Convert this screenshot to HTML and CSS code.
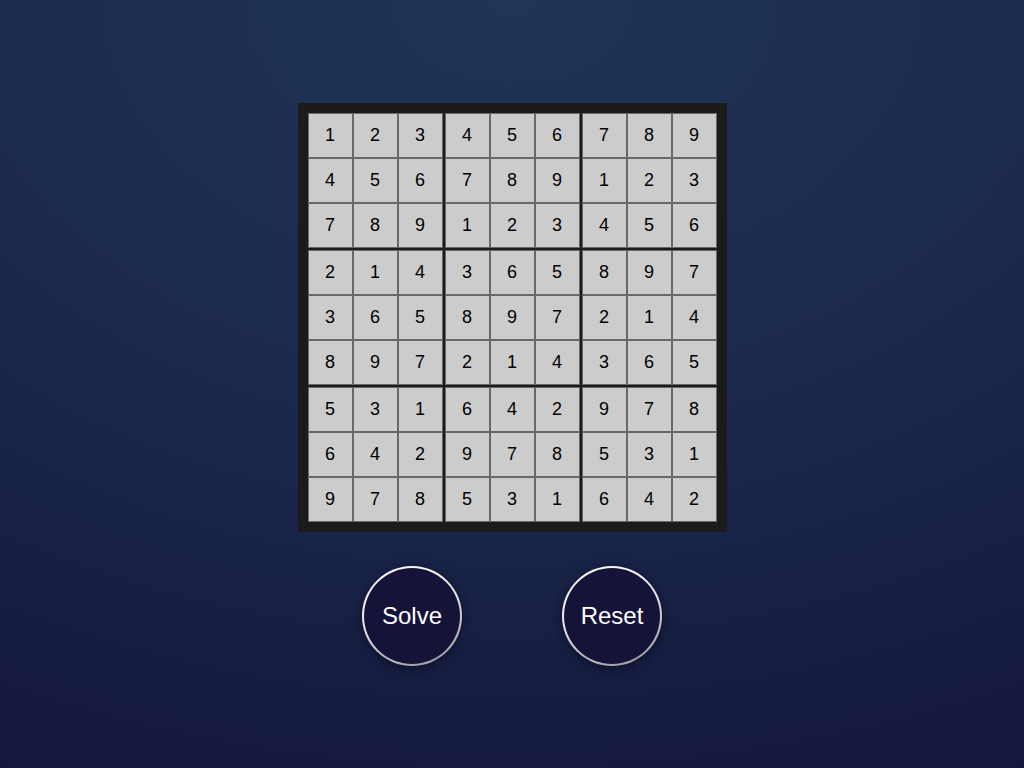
FILE: index.html
```html
<!DOCTYPE html>
<html lang="en">
<head>
<meta charset="utf-8">
<title>Sudoku</title>
<link rel="stylesheet" href="styles.css">
</head>
<body>
<main class="app">
  <div class="board">
    <div class="block"><div class="cell">1</div><div class="cell">2</div><div class="cell">3</div><div class="cell">4</div><div class="cell">5</div><div class="cell">6</div><div class="cell">7</div><div class="cell">8</div><div class="cell">9</div></div>
    <div class="block"><div class="cell">4</div><div class="cell">5</div><div class="cell">6</div><div class="cell">7</div><div class="cell">8</div><div class="cell">9</div><div class="cell">1</div><div class="cell">2</div><div class="cell">3</div></div>
    <div class="block"><div class="cell">7</div><div class="cell">8</div><div class="cell">9</div><div class="cell">1</div><div class="cell">2</div><div class="cell">3</div><div class="cell">4</div><div class="cell">5</div><div class="cell">6</div></div>
    <div class="block"><div class="cell">2</div><div class="cell">1</div><div class="cell">4</div><div class="cell">3</div><div class="cell">6</div><div class="cell">5</div><div class="cell">8</div><div class="cell">9</div><div class="cell">7</div></div>
    <div class="block"><div class="cell">3</div><div class="cell">6</div><div class="cell">5</div><div class="cell">8</div><div class="cell">9</div><div class="cell">7</div><div class="cell">2</div><div class="cell">1</div><div class="cell">4</div></div>
    <div class="block"><div class="cell">8</div><div class="cell">9</div><div class="cell">7</div><div class="cell">2</div><div class="cell">1</div><div class="cell">4</div><div class="cell">3</div><div class="cell">6</div><div class="cell">5</div></div>
    <div class="block"><div class="cell">5</div><div class="cell">3</div><div class="cell">1</div><div class="cell">6</div><div class="cell">4</div><div class="cell">2</div><div class="cell">9</div><div class="cell">7</div><div class="cell">8</div></div>
    <div class="block"><div class="cell">6</div><div class="cell">4</div><div class="cell">2</div><div class="cell">9</div><div class="cell">7</div><div class="cell">8</div><div class="cell">5</div><div class="cell">3</div><div class="cell">1</div></div>
    <div class="block"><div class="cell">9</div><div class="cell">7</div><div class="cell">8</div><div class="cell">5</div><div class="cell">3</div><div class="cell">1</div><div class="cell">6</div><div class="cell">4</div><div class="cell">2</div></div>
  </div>
  <div class="controls">
    <button class="btn" type="button">Solve</button>
    <button class="btn" type="button">Reset</button>
  </div>
</main>
</body>
</html>
```

FILE: styles.css
```css
html, body {
  margin: 0;
  padding: 0;
  height: 100%;
}

body {
  background: radial-gradient(ellipse 120% 110% at 50% 0%, #1f3656 0%, #1b2a4e 45%, #15173d 100%);
  font-family: "Liberation Sans", Arial, sans-serif;
  overflow: hidden;
}

.app {
  display: flex;
  flex-direction: column;
  align-items: center;
  padding-top: 103px;
}

.board {
  display: grid;
  grid-template-columns: repeat(3, 135px);
  grid-template-rows: repeat(3, 135px);
  gap: 2px;
  padding: 10px;
  background: #1b1b1b;
}

.block {
  display: grid;
  grid-template-columns: repeat(3, 45px);
  grid-template-rows: repeat(3, 45px);
}

.cell {
  box-sizing: border-box;
  width: 45px;
  height: 45px;
  background: #cccccd;
  border: 1px solid #686868;
  display: flex;
  align-items: center;
  justify-content: center;
  font-size: 18px;
  color: #000;
}

.controls {
  display: flex;
  gap: 100px;
  margin-top: 34px;
}

.btn {
  box-sizing: border-box;
  width: 100px;
  height: 100px;
  border-radius: 50%;
  border: 2px solid transparent;
  background:
    linear-gradient(#15133a, #15133a) padding-box,
    linear-gradient(160deg, #ffffff 0%, #e6e6e6 45%, #8f8f9a 100%) border-box;
  color: #ffffff;
  font-family: "Liberation Sans", Arial, sans-serif;
  font-size: 24px;
  padding: 0;
  box-shadow: 0 3px 12px rgba(0, 0, 0, 0.45);
  cursor: pointer;
}
```
